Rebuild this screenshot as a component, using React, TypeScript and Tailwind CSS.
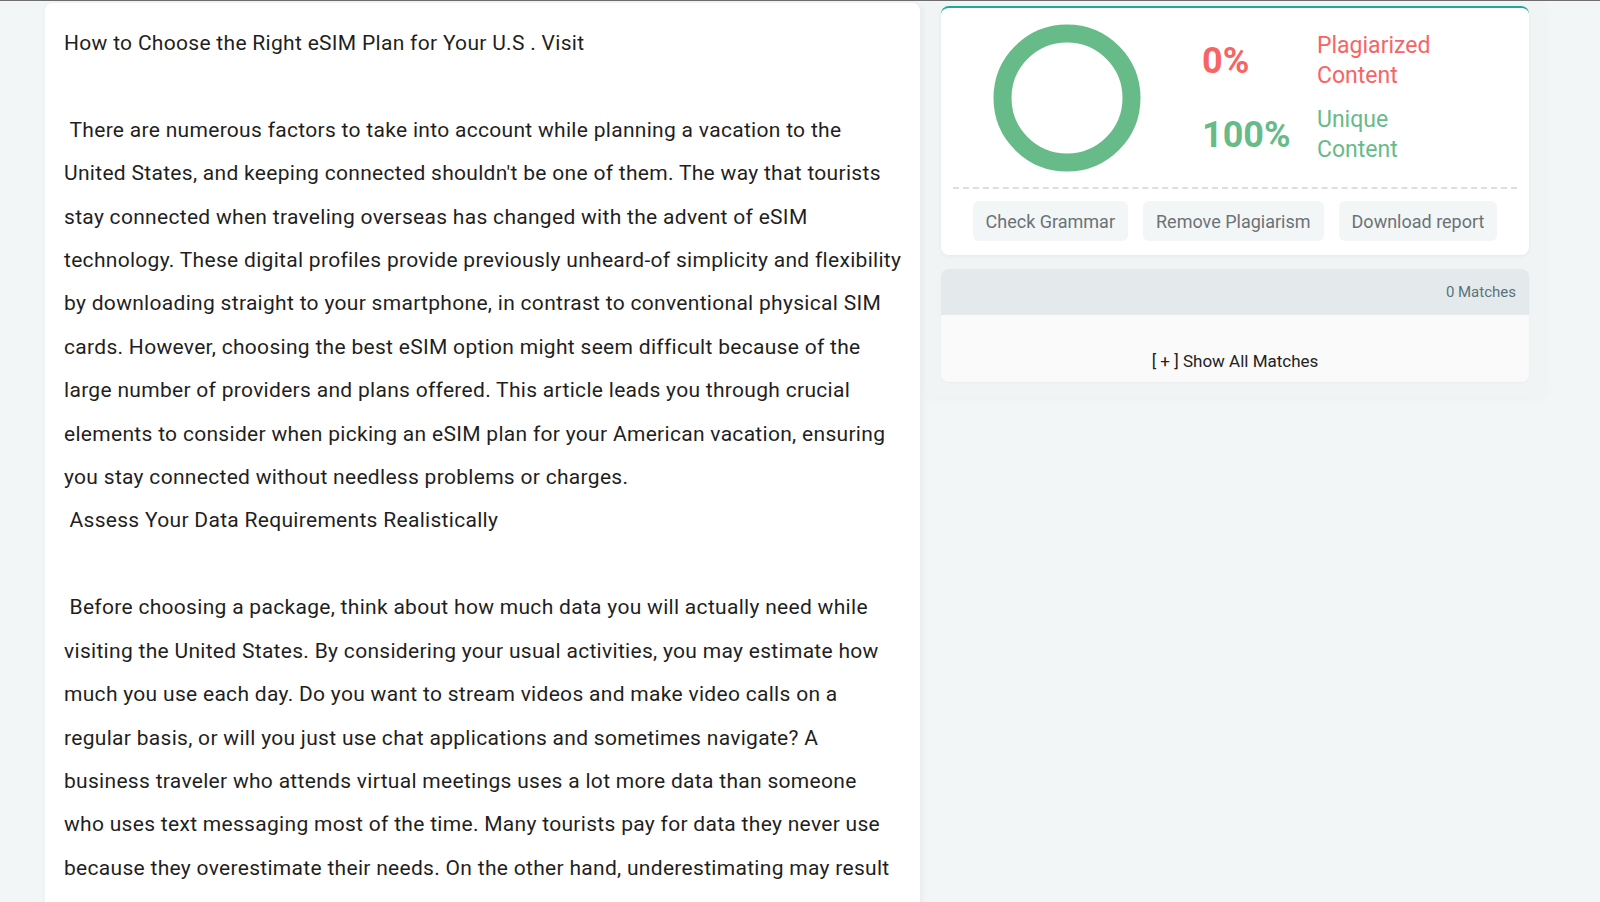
const paragraphText = `How to Choose the Right eSIM Plan for Your U.S . Visit

 There are numerous factors to take into account while planning a vacation to the United States, and keeping connected shouldn't be one of them. The way that tourists stay connected when traveling overseas has changed with the advent of eSIM technology. These digital profiles provide previously unheard-of simplicity and flexibility by downloading straight to your smartphone, in contrast to conventional physical SIM cards. However, choosing the best eSIM option might seem difficult because of the large number of providers and plans offered. This article leads you through crucial elements to consider when picking an eSIM plan for your American vacation, ensuring you stay connected without needless problems or charges.
 Assess Your Data Requirements Realistically

 Before choosing a package, think about how much data you will actually need while visiting the United States. By considering your usual activities, you may estimate how much you use each day. Do you want to stream videos and make video calls on a regular basis, or will you just use chat applications and sometimes navigate? A business traveler who attends virtual meetings uses a lot more data than someone
who uses text messaging most of the time. Many tourists pay for data they never use because they overestimate their needs. On the other hand, underestimating may result in sudden overage charges during critical times. To ensure smooth connectivity, check how much data your phone uses at home.`;

function Donut() {
  return (
    <svg width="148" height="148" viewBox="0 0 148 148">
      <circle cx="74" cy="74" r="64.5" fill="none" stroke="#67bb89" strokeWidth="18" />
    </svg>
  );
}

export default function App() {
  const actions = ["Check Grammar", "Remove Plagiarism", "Download report"];
  return (
    <div
      className="min-h-screen bg-[#f3f6f7] overflow-hidden h-[902px]"
      style={{ fontFamily: "Roboto, 'Noto Sans', sans-serif" }}
    >
      <div className="h-px bg-[#6e6e6e]"></div>
      <div className="flex items-start pl-[45px] gap-[5px]">
        {/* editor */}
        <div className="w-[875px] mt-[2px] bg-white rounded-t-lg shadow-[2px_0_10px_rgba(0,0,0,0.05)] pl-[19px] pt-[19px] h-[920px]">
          <div className="w-[840px] text-[#1f1f1f] text-[21px] tracking-[0.3px] leading-[43.4px] whitespace-pre-wrap">
            {paragraphText}
          </div>
        </div>

        {/* results column */}
        <div className="w-[620px] px-[16px] pb-[16px] bg-[#f1f4f5] shadow-[0_0_10px_rgba(0,0,0,0.03)] rounded-lg">
          <div className="mt-[5px] bg-white rounded-lg border-t-2 border-[#1ea79e] shadow-[0_1px_4px_rgba(0,0,0,0.05)] px-[12px] pb-[14px]">
            <div className="flex items-center pl-[40px] pt-[16px]">
              <Donut />
              <div className="ml-[61px] flex flex-col gap-[14px]">
                <div className="flex items-center">
                  <div className="w-[115px] text-[36px] font-bold text-[#f86464] leading-none">0%</div>
                  <div className="text-[23px] leading-[30px] text-[#f86464]">
                    Plagiarized
                    <br />
                    Content
                  </div>
                </div>
                <div className="flex items-center">
                  <div className="w-[115px] text-[36px] font-bold text-[#67bb89] leading-none">100%</div>
                  <div className="text-[23px] leading-[30px] text-[#67bb89]">
                    Unique
                    <br />
                    Content
                  </div>
                </div>
              </div>
            </div>
            <div className="mt-[15px] border-t-2 border-dashed border-[#dcdfe0]"></div>
            <div className="flex justify-center gap-[15px] mt-[12px]">
              {actions.map((a) => (
                <button
                  key={a}
                  className="h-[40px] px-[13px] rounded-md bg-[#f3f6f7] text-[#6b7276] text-[18px]"
                >
                  {a}
                </button>
              ))}
            </div>
          </div>

          <div className="mt-[14px] rounded-lg overflow-hidden shadow-[0_1px_3px_rgba(0,0,0,0.03)]">
            <div className="h-[46px] bg-[#e4eaec] flex items-center justify-end pr-[13px] text-[15px] text-[#58737d]">
              0 Matches
            </div>
            <div className="h-[67px] bg-[#fafafa] flex items-end justify-center pb-[8px] text-[17px] text-[#222]">
              [ + ] Show All Matches
            </div>
          </div>
        </div>
      </div>
    </div>
  );
}
